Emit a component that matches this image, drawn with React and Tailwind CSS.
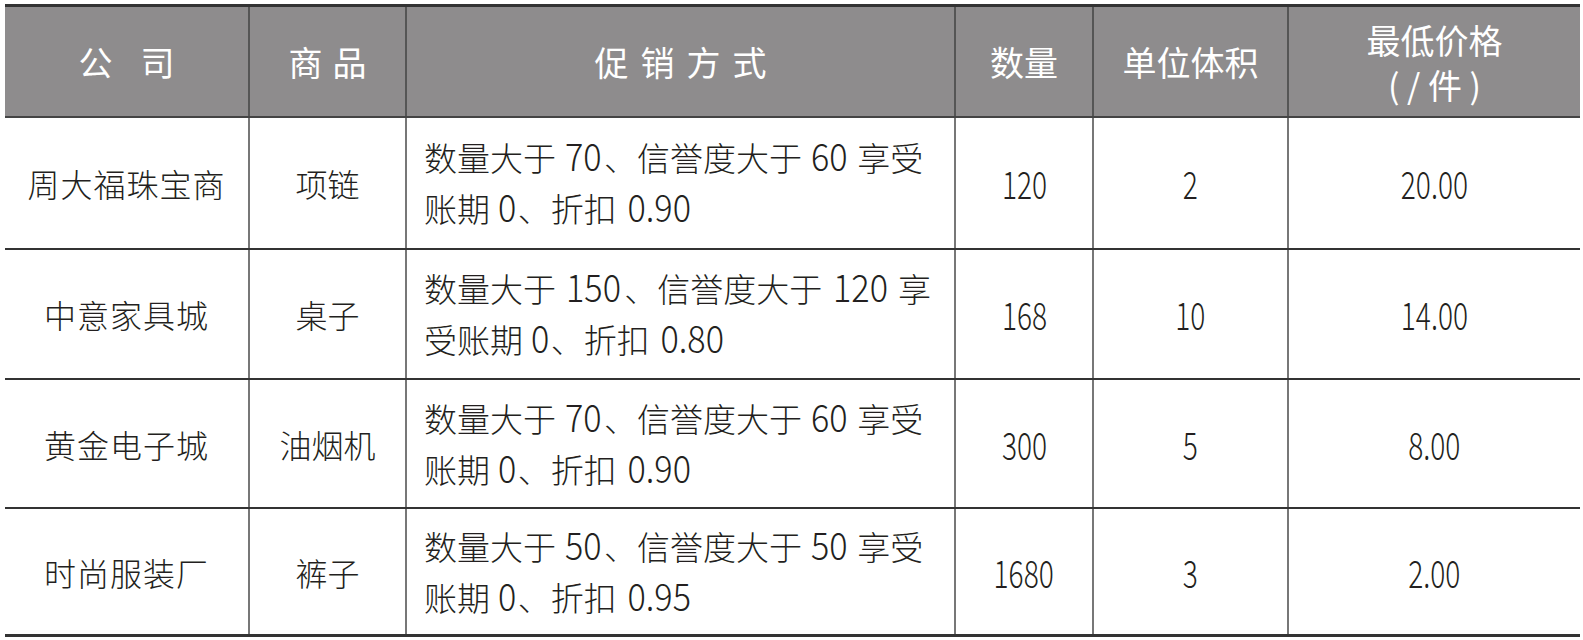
import React from 'react';

// 促销规则表
const rows = [
  {
    company: '周大福珠宝商',
    item: '项链',
    promo: [['数量大于 ', '70', '、信誉度大于 ', '60', ' 享受'], ['账期 ', '0', '、折扣 ', '0.90']],
    qty: '120',
    vol: '2',
    price: '20.00',
    h: 'h-[130px]',
  },
  {
    company: '中意家具城',
    item: '桌子',
    promo: [['数量大于 ', '150', '、信誉度大于 ', '120', ' 享'], ['受账期 ', '0', '、折扣 ', '0.80']],
    qty: '168',
    vol: '10',
    price: '14.00',
    h: 'h-[130px]',
  },
  {
    company: '黄金电子城',
    item: '油烟机',
    promo: [['数量大于 ', '70', '、信誉度大于 ', '60', ' 享受'], ['账期 ', '0', '、折扣 ', '0.90']],
    qty: '300',
    vol: '5',
    price: '8.00',
    h: 'h-[129px]',
  },
  {
    company: '时尚服装厂',
    item: '裤子',
    promo: [['数量大于 ', '50', '、信誉度大于 ', '50', ' 享受'], ['账期 ', '0', '、折扣 ', '0.95']],
    qty: '1680',
    vol: '3',
    price: '2.00',
    h: 'h-[127px]',
  },
];

const grid = 'grid grid-cols-[243px_157px_549px_138px_195px_293px]';

// 原表的数字是瘦高的，这里横向压窄
const Num = ({ children, className = 'scale-x-[0.74]' }) => (
  <span className={`inline-block text-[38px] leading-none tabular-nums ${className}`}>{children}</span>
);

const Cell = ({ children }) => (
  <div className="flex items-center justify-center border-l-2 border-[#777]">{children}</div>
);

export default function App() {
  return (
    <div className="min-h-[640px] bg-white pt-[4px] pl-[5px] font-['Noto_Sans_CJK_SC',sans-serif] text-[#231f20]">
      <div className="w-[1575px] border-t-[3px] border-b-[3px] border-[#333]">
        {/* 表头 */}
        <div className={`${grid} h-[111px] bg-[#8e8c8d] border-b-2 border-[#444] text-white text-[34px] font-normal`}>
          <div className="flex items-center justify-center tracking-[28px] pl-[28px]">公司</div>
          <div className="flex items-center justify-center border-l-2 border-[#555] tracking-[10px] pl-[10px]">商品</div>
          <div className="flex items-center justify-center border-l-2 border-[#555] tracking-[12px] pl-[12px]">促销方式</div>
          <div className="flex items-center justify-center border-l-2 border-[#555]">数量</div>
          <div className="flex items-center justify-center border-l-2 border-[#555]">单位体积</div>
          <div className="flex flex-col items-center justify-center border-l-2 border-[#555] leading-[45px]">
            <span>最低价格</span>
            <span>( / 件 )</span>
          </div>
        </div>

        {/* 数据行 */}
        {rows.map((r, i) => (
          <div key={r.company} className={`${grid} ${r.h} ${i > 0 ? 'border-t-2 border-[#333]' : ''} text-[32px] font-light`}>
            <div className="flex items-center justify-center tracking-[1px]">{r.company}</div>
            <Cell>{r.item}</Cell>
            <div className="flex flex-col justify-center border-l-2 border-[#777] pl-[17px] text-[33px] leading-[51px]">
              {r.promo.map((line, j) => (
                <div key={j}>
                  {line.map((part, k) =>
                    k % 2 === 1 ? (
                      <Num key={k} className="scale-x-[0.9]">{part}</Num>
                    ) : (
                      <span key={k}>{part}</span>
                    )
                  )}
                </div>
              ))}
            </div>
            <Cell><Num>{r.qty}</Num></Cell>
            <Cell><Num>{r.vol}</Num></Cell>
            <Cell><Num>{r.price}</Num></Cell>
          </div>
        ))}
      </div>
    </div>
  );
}
